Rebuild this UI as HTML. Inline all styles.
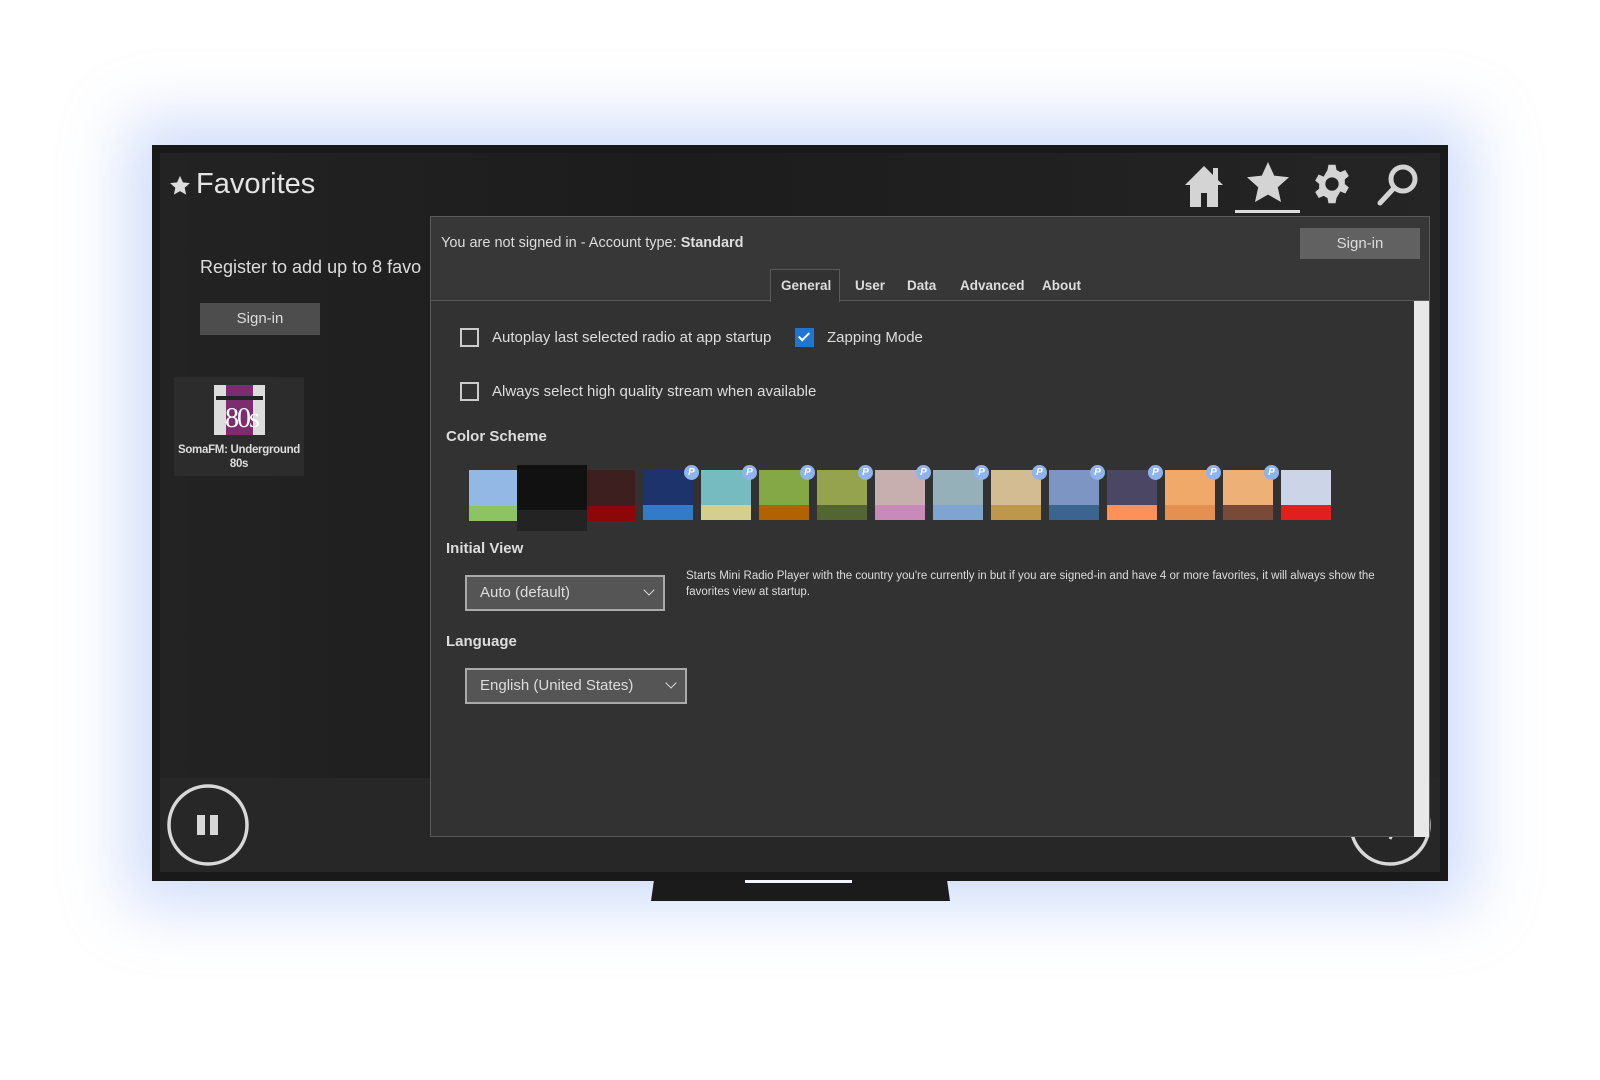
<!DOCTYPE html>
<html><head><meta charset="utf-8"><style>
*{margin:0;padding:0;box-sizing:border-box}
body{width:1600px;height:1080px;background:#fff;position:relative;overflow:hidden;font-family:"Liberation Sans",sans-serif;color:#ddd}
.abs{position:absolute}
#glow{left:152px;top:145px;width:1296px;height:736px;box-shadow:0 0 60px 25px rgba(150,180,245,.45)}
#mon{left:152px;top:145px;width:1296px;height:736px;background:#191919}
#scr{left:160px;top:153px;width:1280px;height:719px;background:#212121;overflow:hidden}
.t{position:absolute;white-space:nowrap}
.cb{position:absolute;width:19px;height:19px;border:2px solid #ccc}
.sw{position:absolute;width:50px;height:50px}
.sw i{position:absolute;left:0;right:0;bottom:0;height:15px}
.p{position:absolute;right:-6px;top:-5px;width:15px;height:15px;border-radius:50%;background:#8fb4ec;color:#fff;font:italic bold 10px "Liberation Sans",sans-serif;text-align:center;line-height:15px}
.dd{position:absolute;background:#555;border:2px solid #aaa;font-size:15px;color:#ddd;padding-left:13px;line-height:31px}
.dd b{position:absolute;right:10px;top:9px;width:8px;height:8px;border-right:1.5px solid #ddd;border-bottom:1.5px solid #ddd;transform:rotate(45deg)}
</style></head><body>
<div class="abs" id="glow"></div>
<div class="abs" id="mon"></div>
<svg class="abs" style="left:651px;top:880px" width="300" height="22"><polygon points="3,0 296,0 299,21 0,21" fill="#1b1b1b"/><rect x="94" y="0" width="107" height="3" fill="#f3f6fd"/></svg>
<div class="abs" id="scr">
  <div class="abs" style="left:0;top:0;width:1280px;height:625px;background:linear-gradient(90deg,#232323,#1c1c1c 40%,#252525)"></div>
  <div class="abs" style="left:0;top:625px;width:1280px;height:95px;background:#272727"></div>
  <svg class="abs" style="left:9px;top:22px" width="22" height="22" viewBox="0 0 24 24"><path d="M12 1l3.2 7 7.6.8-5.7 5.1 1.6 7.5L12 17.6 5.3 21.4l1.6-7.5L1.2 8.8 8.8 8z" fill="#ddd"/></svg>
  <div class="t" style="left:36px;top:15px;font-size:29px;color:#e4e4e4">Favorites</div>
  <div class="t" style="left:40px;top:104px;font-size:18px;color:#ddd">Register to add up to 8 favo</div>
  <div class="abs" style="left:40px;top:150px;width:120px;height:32px;background:#4d4d4d;font-size:15px;text-align:center;line-height:32px">Sign-in</div>
  <div class="abs" style="left:14px;top:224px;width:130px;height:99px;background:#2c2c2c"></div>
  <div class="abs" style="left:54px;top:232px;width:51px;height:50px;background:#ddd"><div class="abs" style="left:12px;top:0;width:27px;height:50px;background:#7b2d6f"></div><div class="abs" style="left:2px;top:11px;width:47px;height:4px;background:#222"></div><div class="t" style="left:11px;top:18px;font:28px 'Liberation Serif',serif;color:#fff;letter-spacing:-2px">80s</div></div>
  <div class="t" style="left:10px;top:290px;width:138px;text-align:center;font-size:11.5px;line-height:14px;white-space:normal;color:#ddd;font-weight:bold;letter-spacing:-0.3px">SomaFM: Underground<br>80s</div>
  <svg class="abs" style="left:1023px;top:10px" width="42" height="46" viewBox="0 0 42 46"><path d="M2 22L21 3l9 9V5h5v12l5 5h-5v22H24V30h-6v14H7V22z" fill="#d4d4d4"/></svg>
  <svg class="abs" style="left:1084px;top:6px" width="48" height="48" viewBox="0 0 24 24"><path d="M12 1.5l3.1 6.8 7.4.8-5.6 5 1.6 7.4L12 17.8l-6.5 3.7 1.6-7.4-5.6-5 7.4-.8z" fill="#d4d4d4"/></svg>
  <div class="abs" style="left:1075px;top:57px;width:65px;height:3px;background:#ddd"></div>
  <svg class="abs" style="left:1151px;top:10px" width="42" height="42" viewBox="0 0 24 24"><path fill="#d4d4d4" fill-rule="evenodd" d="M10 1h4l.6 3 2.2 1.2 2.8-1.2 2 3.4-2.3 2c.1.9.1 1.8 0 2.6l2.3 2-2 3.4-2.8-1.2L14.6 20 14 23h-4l-.6-3-2.2-1.200-2.8 1.2-2-3.4 2.3-2c-.1-.9-.1-1.8 0-2.6l-2.3-2 2-3.4 2.8 1.2L9.4 4zM12 8.2a3.8 3.8 0 100 7.6 3.8 3.8 0 000-7.6z"/></svg>
  <svg class="abs" style="left:1216px;top:10px" width="44" height="44" viewBox="0 0 44 44"><circle cx="27" cy="16" r="12" stroke="#d4d4d4" stroke-width="5" fill="none"/><path d="M18 25L4 40" stroke="#d4d4d4" stroke-width="5" stroke-linecap="round"/></svg>
  <svg class="abs" style="left:6px;top:630px" width="84" height="84"><circle cx="42" cy="42" r="39" stroke="#d8d8d8" stroke-width="3.5" fill="none"/><rect x="31" y="32" width="8" height="20" fill="#d8d8d8"/><rect x="44" y="32" width="8" height="20" fill="#d8d8d8"/></svg>
  <svg class="abs" style="left:1188px;top:630px" width="84" height="84"><circle cx="42" cy="42" r="39" stroke="#d8d8d8" stroke-width="3.5" fill="none"/><path d="M50 40 L42 56" stroke="#d8d8d8" stroke-width="3"/></svg>
</div>
<div class="abs" style="left:430px;top:216px;width:1000px;height:621px;background:#323232;border:1px solid #5a5a5a">
  <div class="abs" style="left:0;top:0;width:998px;height:84px;background:#373737;border-bottom:1px solid #5a5a5a"></div>
  <div class="t" style="left:10px;top:18px;font-size:14.5px">You are not signed in - Account type: <b>Standard</b></div>
  <div class="abs" style="left:869px;top:11px;width:120px;height:31px;background:#616161;font-size:15px;text-align:center;line-height:31px;color:#ddd">Sign-in</div>
  <div class="abs" style="left:339px;top:52px;width:70px;height:33px;background:#323232;border:1px solid #5a5a5a;border-bottom:none"></div>
  <div class="t" style="left:350px;top:61px;font-size:13.5px;font-weight:bold">General</div>
  <div class="t" style="left:424px;top:61px;font-size:13.5px;font-weight:bold">User</div>
  <div class="t" style="left:476px;top:61px;font-size:13.5px;font-weight:bold">Data</div>
  <div class="t" style="left:529px;top:61px;font-size:13.5px;font-weight:bold">Advanced</div>
  <div class="t" style="left:611px;top:61px;font-size:13.5px;font-weight:bold">About</div>
  <div class="abs" style="left:983px;top:84px;width:15px;height:536px;background:#e8e8e8"></div>
  <div class="cb" style="left:29px;top:111px"></div>
  <div class="t" style="left:61px;top:112px;font-size:15px">Autoplay last selected radio at app startup</div>
  <div class="abs" style="left:364px;top:111px;width:19px;height:19px;background:#1f76d2"><div class="abs" style="left:6px;top:2px;width:6px;height:11px;border-right:2px solid #fff;border-bottom:2px solid #fff;transform:rotate(45deg)"></div></div>
  <div class="t" style="left:396px;top:112px;font-size:15px">Zapping Mode</div>
  <div class="cb" style="left:29px;top:165px"></div>
  <div class="t" style="left:61px;top:166px;font-size:15px">Always select high quality stream when available</div>
  <div class="t" style="left:15px;top:211px;font-size:15px;font-weight:bold">Color Scheme</div>
  <div class="sw" style="left:38px;top:253px;width:49px;height:51px;background:#94b8e6"><i style="background:#8dc363"></i></div>
  <div class="sw" style="left:86px;top:248px;width:70px;height:66px;background:#111"><i style="height:21px;background:#232323"></i></div>
  <div class="sw" style="left:156px;top:253px;width:48px;height:51px;background:#3e1f1f"><i style="background:#8c0708"></i></div>
  <div class="sw" style="left:212px;top:253px;background:#1c336b"><i style="background:#317bc8"></i><span class="p">P</span></div>
  <div class="sw" style="left:270px;top:253px;background:#76bbbf"><i style="background:#d4cf8f"></i><span class="p">P</span></div>
  <div class="sw" style="left:328px;top:253px;background:#83a845"><i style="background:#b26200"></i><span class="p">P</span></div>
  <div class="sw" style="left:386px;top:253px;background:#95a34e"><i style="background:#536632"></i><span class="p">P</span></div>
  <div class="sw" style="left:444px;top:253px;background:#c7afb0"><i style="background:#c88ab8"></i><span class="p">P</span></div>
  <div class="sw" style="left:502px;top:253px;background:#95b0b9"><i style="background:#80a4d0"></i><span class="p">P</span></div>
  <div class="sw" style="left:560px;top:253px;background:#d3bc91"><i style="background:#bd974a"></i><span class="p">P</span></div>
  <div class="sw" style="left:618px;top:253px;background:#7c95c3"><i style="background:#3b658f"></i><span class="p">P</span></div>
  <div class="sw" style="left:676px;top:253px;background:#4b4663"><i style="background:#fc9159"></i><span class="p">P</span></div>
  <div class="sw" style="left:734px;top:253px;background:#f1a96a"><i style="background:#e39051"></i><span class="p">P</span></div>
  <div class="sw" style="left:792px;top:253px;background:#edb177"><i style="background:#7b4938"></i><span class="p">P</span></div>
  <div class="sw" style="left:850px;top:253px;background:#ccd5e8"><i style="background:#e31e1e"></i></div>
  <div class="t" style="left:15px;top:323px;font-size:15px;font-weight:bold">Initial View</div>
  <div class="dd" style="left:34px;top:358px;width:200px;height:36px">Auto (default)<b></b></div>
  <div class="t" style="left:255px;top:351px;font-size:11.5px;line-height:16px;white-space:normal;width:700px">Starts Mini Radio Player with the country you're currently in but if you are signed-in and have 4 or more favorites, it will always show the favorites view at startup.</div>
  <div class="t" style="left:15px;top:416px;font-size:15px;font-weight:bold">Language</div>
  <div class="dd" style="left:34px;top:451px;width:222px;height:36px">English (United States)<b></b></div>
</div>
</body></html>
